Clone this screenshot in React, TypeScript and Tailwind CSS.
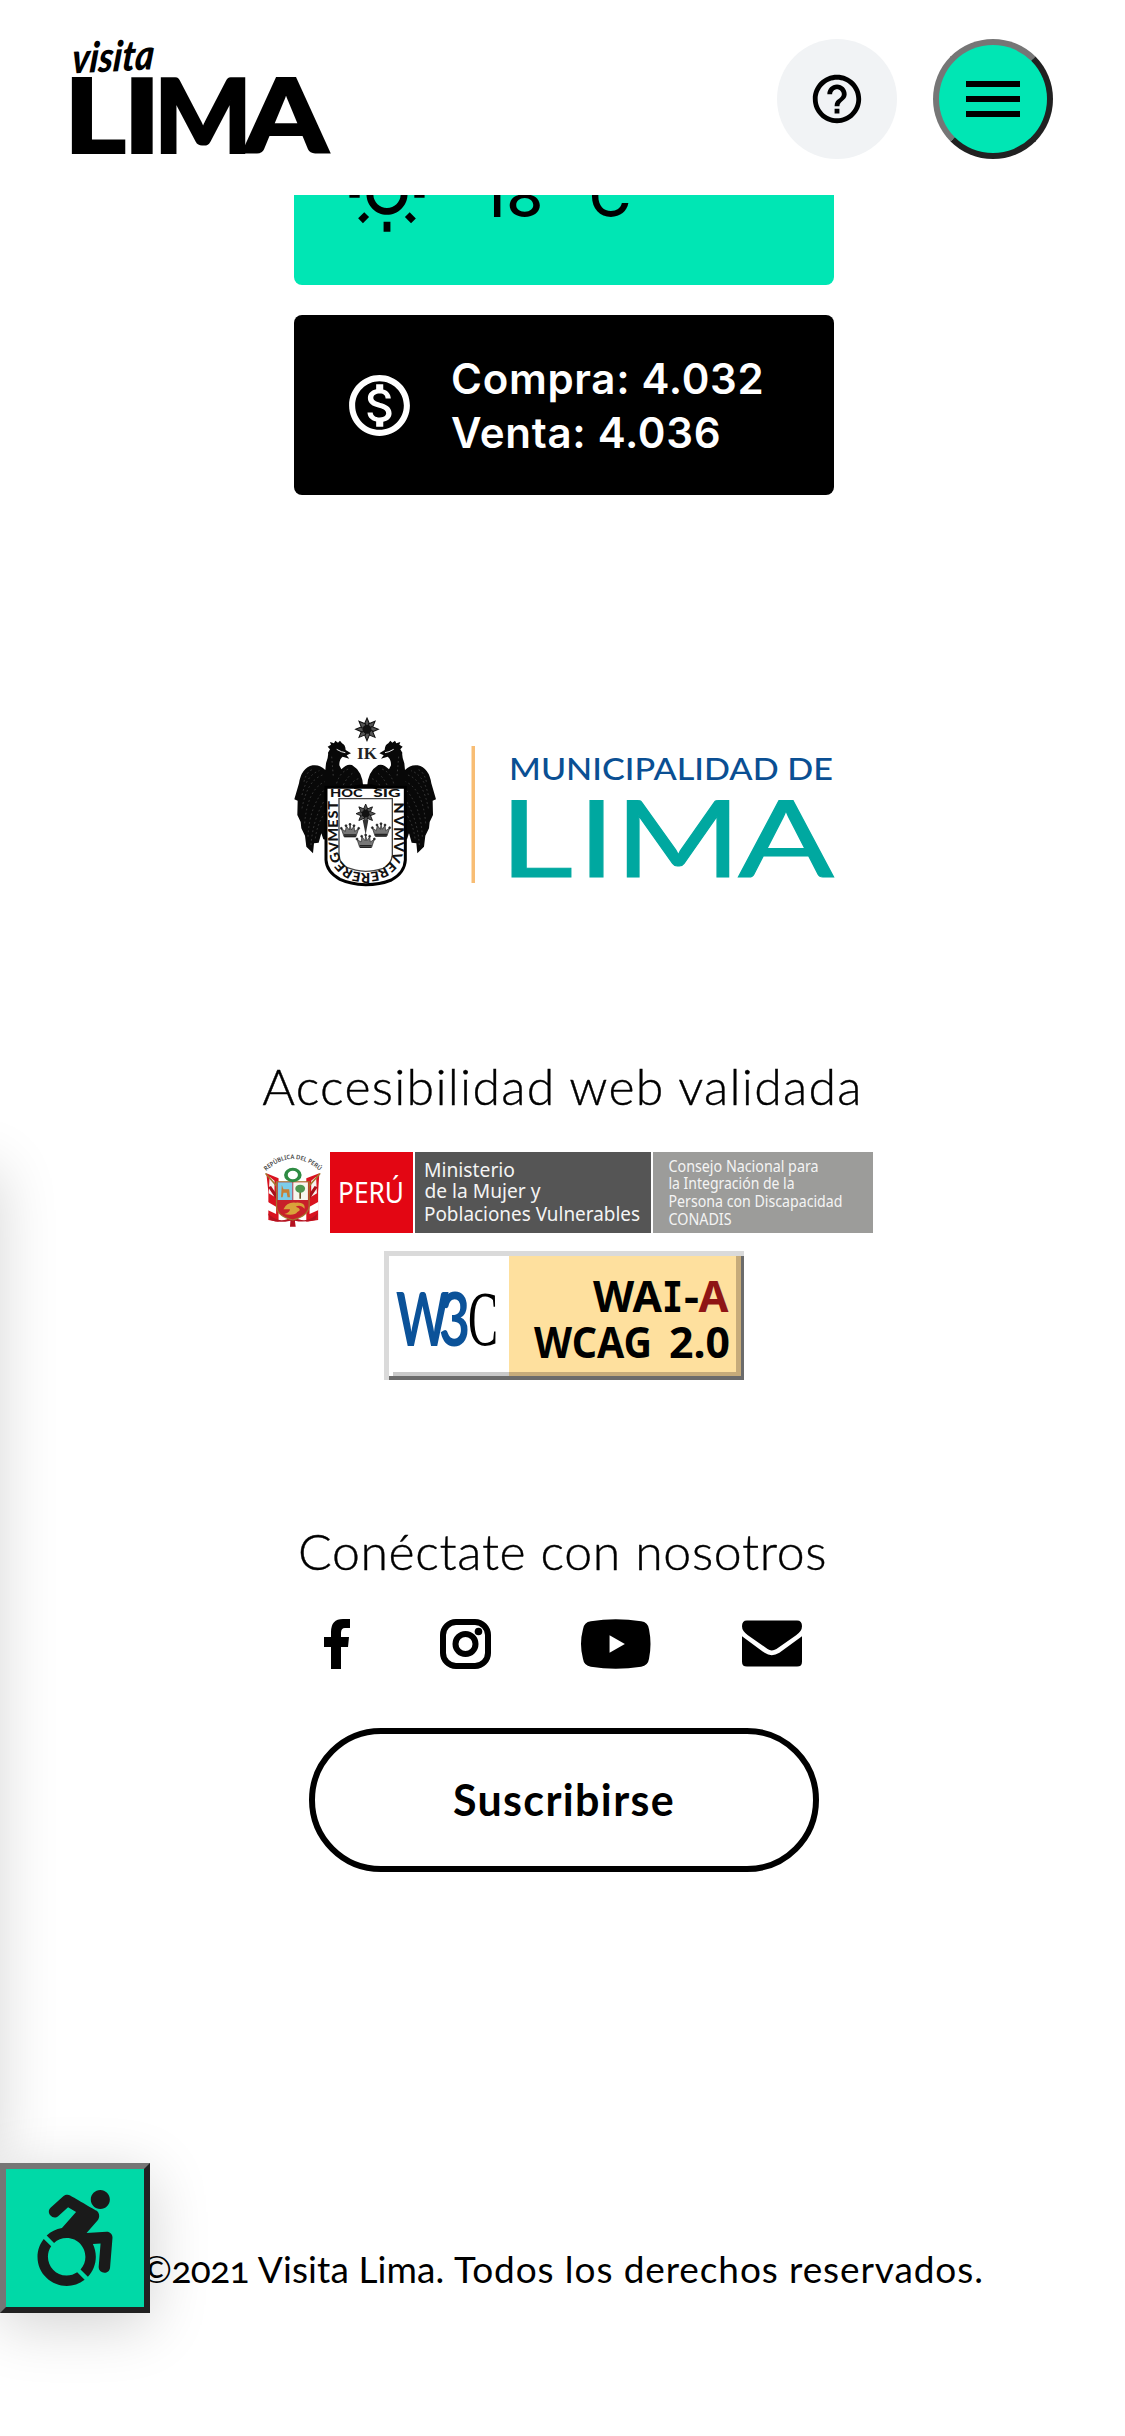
import { FaAccessibleIcon } from "react-icons/fa";
import { MdHelpOutline, MdOutlineMonetizationOn } from "react-icons/md";

const LATO = "Lato, 'Open Sans', sans-serif";
const NOTO = "'Noto Sans', 'Open Sans', sans-serif";
const SERIF = "'Liberation Serif', serif";
const MONO = "'DejaVu Sans Mono', monospace";

type FitProps = {
  x: number;
  y: number;
  w: number;
  size: number;
  weight?: number;
  fill: string;
  font?: string;
  italic?: boolean;
  stroke?: number;
  children: string;
};

/* A line of logo lettering stretched to a set width. */
function Fit({ x, y, w, size, weight = 400, fill, font = LATO, italic, stroke = 0, children }: FitProps) {
  return (
    <text
      x={x}
      y={y}
      textLength={w}
      lengthAdjust="spacingAndGlyphs"
      fontSize={size}
      fontWeight={weight}
      fontFamily={font}
      fontStyle={italic ? "italic" : "normal"}
      fill={fill}
      stroke={stroke ? fill : "none"}
      strokeWidth={stroke}
    >
      {children}
    </text>
  );
}

function VisitaLimaLogo() {
  return (
    <svg className="h-[120px] w-[270px] overflow-visible" viewBox="0 0 270 120" aria-label="Visita Lima">
      <g transform="rotate(-3 0 36) skewX(-8)">
        <Fit x={4} y={34.5} w={82} size={42} weight={900} italic fill="#000">visita</Fit>
      </g>
      <Fit x={-8} y={113.5} w={62} size={103} weight={900} fill="#000" stroke={2}>L</Fit>
      <Fit x={51} y={113.5} w={38} size={103} weight={900} fill="#000" stroke={2}>I</Fit>
      <Fit x={82} y={113.5} w={98} size={103} weight={900} fill="#000" stroke={2}>M</Fit>
      <Fit x={172} y={113.5} w={84} size={103} weight={900} fill="#000" stroke={2}>A</Fit>
    </svg>
  );
}

function Crown({ x, y }: { x: number; y: number }) {
  return (
    <g transform={`translate(${x} ${y})`} fill="#222" stroke="#222" strokeWidth="2">
      <path d="M-26 -6L-14 2L-11 -14L-2 -2L0 -18L4 -2L12 -14L14 2L26 -6L18 18H-18Z" fill="#777" />
      <circle cx="-26" cy="-7" r="3" />
      <circle cx="-12" cy="-15" r="3" />
      <circle cx="0" cy="-19" r="3" />
      <circle cx="12" cy="-15" r="3" />
      <circle cx="26" cy="-7" r="3" />
      <path d="M-18 13H18M-17 18H17" strokeWidth="4" />
    </g>
  );
}

function Star({ x, y, r }: { x: number; y: number; r: number }) {
  return (
    <g transform={`translate(${x} ${y}) scale(${r / 32})`} fill="#111">
      {[0, 45, 90, 135, 180, 225, 270, 315].map((a) => (
        <path key={a} d="M0 -33L8 -14L0 -4L-8 -14Z" transform={`rotate(${a})`} fill="#555" stroke="#111" strokeWidth="3" />
      ))}
      <circle r="13" />
    </g>
  );
}

function Eagle() {
  return (
    <g>
      <path
        d="M213 160L197 150Q196 134 186 130L180 122L174 128L166 122L162 130L150 126L153 134L143 140L150 148L144 158Q146 170 138 190L136 210Q120 193 98 196Q64 204 57 250L43 298L53 302L52 345L62 366L64 385L75 407L79 440L99 460L102 430L116 428L124 400L130 418L143 420V262H250Q248 214 216 195Q200 190 184 208L178 196Q178 176 188 170L208 176L200 166Z"
        fill="#080808"
      />
      <g fill="none" stroke="#555" strokeWidth="2" strokeDasharray="5 8">
        <path d="M72 245Q80 212 100 208M66 285Q80 225 118 212M66 325Q82 240 128 225M74 370Q82 270 134 245M84 410Q88 320 134 268M93 435Q98 360 134 300M106 415Q112 370 134 340" />
        <path d="M170 250Q180 215 208 206M190 255Q204 226 224 216M212 256Q220 240 236 236M155 170L160 230" />
      </g>
      <path d="M170 148L184 155L196 158" stroke="#eee" strokeWidth="3" fill="none" />
    </g>
  );
}

function CityCrest() {
  const rim: [string, number, number, number][] = [
    ["T", 160, 316, -90], ["S", 160, 344, -90], ["E", 160, 371, -90], ["M", 160, 404, -90],
    ["V", 161, 440, -96], ["G", 165, 473, -110], ["E", 180, 501, -132], ["R", 202, 519, -150],
    ["E", 229, 530, -170], ["R", 257, 532, 180], ["E", 285, 529, 170], ["R", 311, 519, 152],
    ["E", 334, 501, 135], ["V", 350, 473, 110], ["V", 355, 440, 90], ["M", 355, 402, 90],
    ["V", 355, 362, 90], ["N", 355, 324, 90],
  ];
  return (
    <g>
      <Star x={261} y={88} r={33} />
      <Fit x={231} y={176} w={60} size={53} weight={700} font={SERIF} fill="#222">IK</Fit>
      <Eagle />
      <g transform="translate(511 0) scale(-1 1)">
        <Eagle />
      </g>
      <path d="M138 262H376V480Q374 518 334 540Q300 554 257 554Q210 552 180 538Q140 516 138 480Z" fill="#fff" stroke="#000" strokeWidth="9" />
      <path d="M177 296H337V466Q334 492 310 505Q280 514 257 514Q225 512 202 503Q179 492 177 466Z" fill="#fff" stroke="#444" strokeWidth="4" />
      <path d="M222 262L244 258H274L292 264" stroke="#000" strokeWidth="10" fill="none" />
      <Fit x={150} y={292} w={98} size={34} weight={900} font={LATO} fill="#111">HOC</Fit>
      <Fit x={280} y={292} w={82} size={34} weight={900} font={LATO} fill="#111">SIG</Fit>
      {rim.map(([c, x, y, a], i) => (
        <text key={i} transform={`translate(${x} ${y}) rotate(${a}) scale(1.1 1)`} textAnchor="middle" dominantBaseline="central" fontSize="39" fontWeight="900" fontFamily={LATO} fill="#111">
          {c}
        </text>
      ))}
      <Star x={257} y={341} r={28} />
      <path d="M248 360L257 404L265 360Z" fill="#333" />
      <Crown x={210} y={392} />
      <Crown x={303} y={390} />
      <Crown x={257} y={424} />
    </g>
  );
}

function MunicipalityLogo() {
  return (
    <svg className="h-[170px] w-[543px] overflow-visible" viewBox="0 0 543 170" aria-label="Municipalidad de Lima">
      <g transform="translate(-14 -16) scale(0.33333)">
        <CityCrest />
      </g>
      <rect x="177.5" y="30" width="3.5" height="137" fill="#f8bd74" />
      <Fit x={215} y={64} w={324} size={31.5} weight={500} fill="#0a4f93">MUNICIPALIDAD DE</Fit>
      <Fit x={205} y={160.5} w={74} size={107} fill="#00a8a0" stroke={1}>L</Fit>
      <Fit x={284} y={160.5} w={37} size={107} fill="#00a8a0" stroke={1}>I</Fit>
      <Fit x={321} y={160.5} w={126} size={107} fill="#00a8a0" stroke={1}>M</Fit>
      <Fit x={444} y={160.5} w={96} size={107} fill="#00a8a0" stroke={1}>A</Fit>
    </svg>
  );
}

function PeruCrest() {
  return (
    <svg className="h-[80px] w-[65px] overflow-visible" viewBox="0 0 65 80" aria-label="República del Perú">
      <defs>
        <path id="arc" d="M3 19Q30 -5 57 19" />
      </defs>
      <text fontFamily={NOTO} fontSize="6.2" fontWeight="600" fill="#444">
        <textPath href="#arc" textLength="60" lengthAdjust="spacingAndGlyphs">REPÚBLICA DEL PERÚ</textPath>
      </text>
      <g transform="translate(-13 -112) scale(0.408 0.33333)">
        <path d="M40 400L70 415V545L45 540V455Z" fill="#d9121f" />
        <path d="M170 400L138 415V545L167 540V455Z" fill="#d9121f" />
        <path d="M48 410L60 422V470L46 460ZM162 410L150 422V470L164 460Z" fill="#f5f2f2" />
        <path d="M43 485L64 500V522L43 510ZM168 485L146 500V522L168 510Z" fill="#fff" />
        <path d="M38 400L74 450M172 400L136 450" stroke="#a4762c" strokeWidth="4" />
        <path d="M48 440L70 480M162 440L140 480" stroke="#a80f1a" strokeWidth="8" />
        <path d="M44 520Q70 555 105 530Q140 555 166 520L160 540Q130 548 110 542L112 560H98L99 542Q70 550 50 540Z" fill="#b51220" />
        <path d="M65 425H145V500Q142 528 105 540Q66 528 65 500Z" fill="#c8202a" stroke="#a4762c" strokeWidth="3" />
        <path d="M68 427H104V480H68Z" fill="#7ccdea" />
        <path d="M106 427H142V480H106Z" fill="#f6f6ee" />
        <path d="M78 435L82 448H96L98 472H92L90 458H82L80 472H76Z" fill="#c57f35" />
        <path d="M123 476V450" stroke="#6c5424" strokeWidth="4" />
        <circle cx="123" cy="446" r="12" fill="#4e9650" />
        <path d="M82 508Q90 485 112 488Q136 486 134 506Q124 492 112 500Q130 508 116 516Q110 528 84 522Q98 518 98 508Z" fill="#d9a33a" />
        <circle cx="105" cy="405" r="17" fill="none" stroke="#2e8b43" strokeWidth="9" />
      </g>
    </svg>
  );
}

function AccessibilityBanner() {
  return (
    <div className="flex h-[81px] w-[610px] items-stretch gap-[2px]">
      <PeruCrest />
      <svg className="h-[81px] w-[83px] bg-[#e30613]" viewBox="0 0 83 81">
        <Fit x={8} y={50.5} w={66} size={28.5} font={NOTO} fill="#fff">PERÚ</Fit>
      </svg>
      <svg className="h-[81px] w-[236px] bg-[#555]" viewBox="0 0 236 81">
        <Fit x={9} y={24.5} w={91} size={20.5} font={NOTO} fill="#f4f4f4">Ministerio</Fit>
        <Fit x={9.5} y={46} w={116} size={20.5} font={NOTO} fill="#f4f4f4">de la Mujer y</Fit>
        <Fit x={9} y={68.5} w={216} size={20.5} font={NOTO} fill="#f4f4f4">Poblaciones Vulnerables</Fit>
      </svg>
      <svg className="h-[81px] w-[220px] bg-[#9c9c9a]" viewBox="0 0 220 81">
        <Fit x={15.5} y={19.5} w={150} size={16.5} font={NOTO} fill="#f4f4f4">Consejo Nacional para</Fit>
        <Fit x={15.5} y={37} w={126} size={16.5} font={NOTO} fill="#f4f4f4">la Integración de la</Fit>
        <Fit x={15.5} y={55} w={174} size={16.5} font={NOTO} fill="#f4f4f4">Persona con Discapacidad</Fit>
        <Fit x={15.5} y={73} w={63} size={16.5} font={NOTO} fill="#f4f4f4">CONADIS</Fit>
      </svg>
    </div>
  );
}

function W3cBadge() {
  return (
    <svg className="h-[129px] w-[360px]" viewBox="0 0 360 129" aria-label="W3C WAI-A WCAG 2.0">
      <rect width="360" height="129" fill="#dadada" />
      <rect x="5" y="5" width="120" height="120" fill="#fff" />
      <rect x="125" y="5" width="229" height="120" fill="#fee09e" />
      <rect x="9" y="121" width="116" height="4" fill="#c9c9c9" />
      <rect x="125" y="121" width="232" height="4" fill="#c6ab7a" />
      <rect x="352" y="5" width="5" height="117" fill="#c6ab7a" />
      <rect x="357" y="5" width="3" height="124" fill="#6b6b6b" />
      <rect x="5" y="125" width="355" height="4" fill="#6b6b6b" />
      <Fit x={12} y={95} w={53} size={75} weight={700} fill="#0b5299">W</Fit>
      <Fit x={55} y={95} w={31} size={75} weight={700} fill="#0b5299">3</Fit>
      <Fit x={84} y={94} w={30} size={78} font={SERIF} fill="#000">C</Fit>
      <Fit x={209} y={61} w={69} size={43.5} weight={700} font={NOTO} fill="#000">WA</Fit>
      <Fit x={278} y={61} w={21} size={42.5} weight={700} font={MONO} fill="#000">I</Fit>
      <Fit x={300} y={61} w={15} size={43.5} weight={700} font={NOTO} fill="#000">-</Fit>
      <Fit x={314.5} y={61} w={30} size={43.5} weight={700} font={NOTO} fill="#8f1515">A</Fit>
      <Fit x={150} y={107} w={118} size={43.5} weight={700} font={NOTO} fill="#000">WCAG</Fit>
      <Fit x={285} y={107} w={61} size={43.5} weight={700} font={NOTO} fill="#000">2.0</Fit>
    </svg>
  );
}

function SocialIcons() {
  return (
    <div className="flex h-[50px] items-center">
      <svg className="h-[50px] w-[26px]" viewBox="0 0 26 50">
        <path d="M7 50V28H0V18H7V13Q7 0 19 0H26V9H21Q17 9 17 14V18H25L24 28H17V50Z" />
      </svg>
      <svg className="ml-[90px] h-[50px] w-[51px]" viewBox="0 0 51 50" fill="none" stroke="#000" strokeWidth="6">
        <rect x="3" y="3" width="45" height="44" rx="13" />
        <circle cx="25.5" cy="25" r="10" />
        <circle cx="38.5" cy="12.5" r="3.8" fill="#000" stroke="none" />
      </svg>
      <svg className="ml-[90px] h-[50px] w-[70px]" viewBox="0 0 71 50">
        <path d="M10 2Q35 -2 61 2Q68 3 69 10Q72 25 69 40Q68 47 61 48Q35 52 10 48Q3 47 2 40Q-2 25 2 10Q3 3 10 2Z" />
        <path d="M29 16V34L44.500 25Z" fill="#fff" />
      </svg>
      <svg className="ml-[91px] h-[48px] w-[60px]" viewBox="0 0 61 48">
        <path d="M5 0H56Q61 0 61 6Q61 11 55 15L35 29Q30 32 26 29L6 15Q0 11 0 6Q0 0 5 0Z" />
        <path d="M0 16L23 33Q30 38 38 33L61 16V42Q61 47 56 47H5Q0 47 0 42Z" />
      </svg>
    </div>
  );
}

export default function App() {
  return (
    <div className="relative flex h-[2436px] w-[1125px] flex-col items-center overflow-hidden bg-white font-[Lato,'Open_Sans',sans-serif] text-black">
      <header className="flex h-[195px] w-full shrink-0 items-start justify-between pl-[72px] pr-[72px] pt-[39px]">
        <VisitaLimaLogo />
        <div className="flex gap-9">
          <button className="flex size-[120px] items-center justify-center rounded-full bg-[#f1f3f5]">
            <MdHelpOutline className="size-[58px]" />
          </button>
          <button className="flex size-[120px] flex-col items-center justify-center gap-[9px] rounded-full border-[6px] border-b-[#212121] border-l-[#767676] border-r-[#212121] border-t-[#767676] bg-[#00e6b4]">
            <span className="h-[6px] w-[54px] bg-black" />
            <span className="h-[6px] w-[54px] bg-black" />
            <span className="h-[6px] w-[54px] bg-black" />
          </button>
        </div>
      </header>

      <section className="ml-[3px] h-[300px] w-[540px] shrink-0 overflow-hidden font-[Inter,Lato,sans-serif]">
        <div className="-mt-[90px] flex h-[180px] items-center rounded-lg bg-[#00e6b4] pl-[52px]">
          <svg className="mt-[1px] size-[82px]" viewBox="0 0 24 24">
            <path d="M6.760 4.840l-1.800-1.790-1.410 1.410 1.790 1.790 1.420-1.410zM4 10.500H1v2h3v-2zm9-9.950h-2V3.500h2V.55zm7.450 3.910l-1.410-1.410-1.790 1.790 1.410 1.410 1.790-1.790zm-3.210 13.700l1.790 1.800 1.410-1.410-1.800-1.790-1.400 1.400zM20 10.500v2h3v-2h-3zm-8-5c-3.310 0-6 2.690-6 6s2.690 6 6 6 6-2.690 6-6-2.690-6-6-6zm0 10c-2.210 0-4-1.790-4-4s1.790-4 4-4 4 1.790 4 4-1.790 4-4 4zm-1 6.950h2V19.500h-2v2.950zm-7.450-3.910l1.410 1.410 1.790-1.800-1.410-1.410-1.790 1.800z" />
          </svg>
          <div className="ml-[53px] mt-[2px] whitespace-pre text-[58px] font-medium leading-[60px] tracking-[1.500px]">18 °C</div>
        </div>
        <div className="mt-[30px] flex h-[180px] items-center rounded-lg bg-black pl-[49px] text-white">
          <MdOutlineMonetizationOn className="size-[73px]" />
          <div className="ml-[35px] mt-[1px] text-[42px] font-semibold leading-[54px] tracking-[0.7px]">
            <p>Compra: 4.032</p>
            <p>Venta: 4.036</p>
          </div>
        </div>
      </section>

      <div className="mt-[221px] h-[170px] shrink-0 pl-[6px]">
        <MunicipalityLogo />
      </div>

      <section className="mt-[164px] flex shrink-0 flex-col items-center">
        <h2 className="h-[72px] whitespace-nowrap text-[50px] font-light leading-[72px] tracking-[1.25px] [-webkit-text-stroke:0.4px_black]">Accesibilidad web validada</h2>
        <div className="mt-[30px] pl-[11px]">
          <AccessibilityBanner />
        </div>
        <div className="mt-[18px] pl-[3px]">
          <W3cBadge />
        </div>
      </section>

      <section className="mt-[135px] flex shrink-0 flex-col items-center">
        <h2 className="h-[72px] whitespace-nowrap text-[50px] font-light leading-[72px] tracking-[0.65px] [-webkit-text-stroke:0.4px_black]">Conéctate con nosotros</h2>
        <div className="mt-[32px]">
          <SocialIcons />
        </div>
        <button className="ml-[3px] mt-[59px] flex h-[144px] w-[510px] items-center justify-center rounded-full border-[6px] border-black text-[43px] font-bold tracking-[1.35px]">
          Suscribirse
        </button>
      </section>

      <footer className="mt-[370px] h-[54px] shrink-0 whitespace-nowrap text-[37px] leading-[54px] [font-variant-numeric:oldstyle-nums]">
        <span className="tracking-[-0.6px]">©2021 </span>
        <span className="tracking-[0.1px]">Visita Lima. </span>
        <span className="tracking-[0.9px]">Todos los derechos reservados.</span>
      </footer>

      <div className="absolute -left-[100px] top-[1170px] h-[1000px] w-[100px] shadow-[0_0_60px_rgba(0,0,0,0.16)]" />
      <button className="absolute left-0 top-[2163px] flex size-[150px] items-center justify-center border-[6px] border-b-[#212121] border-l-[#767676] border-r-[#212121] border-t-[#767676] bg-[#00d9a7] shadow-[0_12px_60px_rgba(0,0,0,0.18)]">
        <FaAccessibleIcon className="size-[96px] text-[#1a1a1a]" />
      </button>
    </div>
  );
}
